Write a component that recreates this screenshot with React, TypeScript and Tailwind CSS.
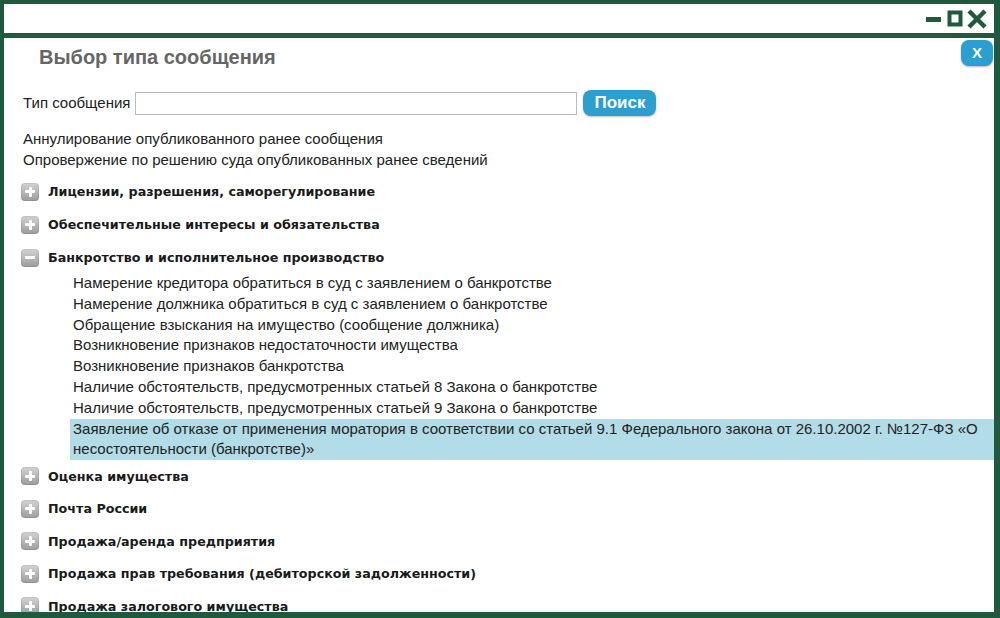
import React from "react";

const G = "#1f5a3f";

function PlusIcon({ minus = false }: { minus?: boolean }) {
  return (
    <span className="relative inline-flex h-[18px] w-[18px] shrink-0 items-center justify-center rounded-[4px] bg-gradient-to-b from-[#d4d4d4] to-[#9c9c9c] shadow-[inset_0_0_0_1px_rgba(0,0,0,0.08)]">
      <span className="absolute h-[3px] w-[10px] rounded-[1px] bg-white" />
      {!minus && <span className="absolute h-[10px] w-[3px] rounded-[1px] bg-white" />}
    </span>
  );
}

function Group({ label, minus = false, tight = false }: { label: string; minus?: boolean; tight?: boolean }) {
  return (
    <div className={tight ? "flex h-[32.5px] items-center gap-[9px] pl-[17px]" : "flex h-[33px] items-center gap-[9px] pl-[17px]"}>
      <PlusIcon minus={minus} />
      <span className="font-['DejaVu_Sans',sans-serif] text-[12.7px] font-bold text-[#1a1a1a]">{label}</span>
    </div>
  );
}

const children = [
  "Намерение кредитора обратиться в суд с заявлением о банкротстве",
  "Намерение должника обратиться в суд с заявлением о банкротстве",
  "Обращение взыскания на имущество (сообщение должника)",
  "Возникновение признаков недостаточности имущества",
  "Возникновение признаков банкротства",
  "Наличие обстоятельств, предусмотренных статьей 8 Закона о банкротстве",
  "Наличие обстоятельств, предусмотренных статьей 9 Закона о банкротстве",
];

export default function App() {
  return (
    <div className="h-[618px] w-[1000px] overflow-hidden bg-white font-['Liberation_Sans',Arial,sans-serif]">
      <div className="flex h-full w-full flex-col border-b-[6px] border-l-4 border-r-[6px] border-t-4 border-[#1f5a3f]">
        {/* top bar */}
        <div className="flex h-[34px] shrink-0 items-center justify-end border-b-[5px] border-[#1f5a3f] pr-[5px]">
          <svg width="64" height="20" viewBox="0 0 64 20">
            <rect x="1" y="8" width="15" height="5" fill={G} />
            <rect x="24.5" y="3.5" width="11" height="12" fill="none" stroke={G} strokeWidth="4" />
            <path d="M44 2 L60 18 M60 2 L44 18" stroke={G} strokeWidth="4.5" strokeLinecap="butt" />
          </svg>
        </div>
        {/* content */}
        <div className="relative flex-1 overflow-hidden">
          <button className="absolute right-[1px] top-[2px] flex h-[26px] w-[32px] items-center justify-center rounded-[8px] bg-[#2a9fd0] text-[15px] font-bold text-white shadow-[0_1px_2px_rgba(0,0,0,0.3)]">
            X
          </button>
          <div className="pl-[35px] pt-[7px] text-[20px] font-bold leading-[24px] text-[#666666]">
            Выбор типа сообщения
          </div>
          <div className="mt-[21px] flex items-center pl-[19px]">
            <span className="text-[15px] text-[#222]">Тип сообщения</span>
            <input className="ml-[5px] h-[23px] w-[442px] border border-[#bbbbbb] bg-white outline-none" />
            <button className="ml-[6px] flex h-[26px] w-[73px] items-center justify-center rounded-[8px] bg-[#2a9fd0] text-[17px] font-bold text-white shadow-[0_1px_2px_rgba(0,0,0,0.25)]">
              Поиск
            </button>
          </div>
          <div className="mt-[12px] pl-[19px] text-[15px] leading-[21px] text-[#222]">
            <div>Аннулирование опубликованного ранее сообщения</div>
            <div>Опровержение по решению суда опубликованных ранее сведений</div>
          </div>
          <div className="mt-[5px]">
            <Group label="Лицензии, разрешения, саморегулирование" />
            <Group label="Обеспечительные интересы и обязательства" />
            <Group label="Банкротство и исполнительное производство" minus />
            <div className="-mt-[1px] pl-[66px] text-[15px] leading-[20.8px] text-[#222]">
              {children.map((c) => (
                <div key={c} className="pl-[3px]">{c}</div>
              ))}
              <div className="bg-[#b2dce7] pl-[3px] pr-[8px]">
                Заявление об отказе от применения моратория в соответствии со статьей 9.1 Федерального закона от 26.10.2002 г. №127-ФЗ «О несостоятельности (банкротстве)»
              </div>
            </div>
            <Group label="Оценка имущества" tight />
            <Group label="Почта России" tight />
            <Group label="Продажа/аренда предприятия" tight />
            <Group label="Продажа прав требования (дебиторской задолженности)" tight />
            <Group label="Продажа залогового имущества" tight />
          </div>
        </div>
      </div>
    </div>
  );
}
